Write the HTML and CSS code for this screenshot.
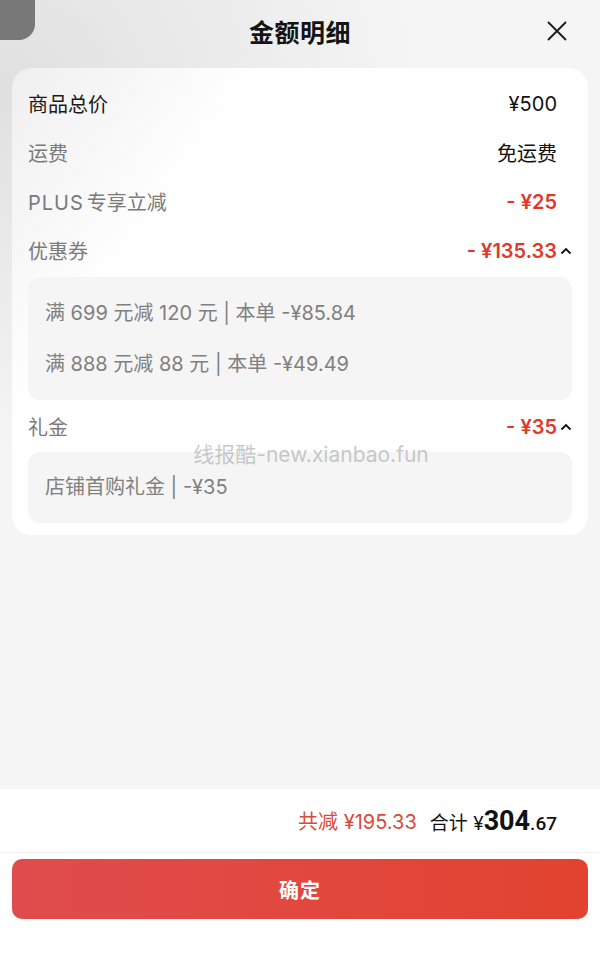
FILE: index.html
```html
<!DOCTYPE html>
<html lang="zh-CN">
<head>
    <meta charset="UTF-8">
    <meta name="viewport" content="width=device-width, initial-scale=1.0">
    <title>金额明细</title>
    <link rel="stylesheet" href="styles.css">
</head>
<body>

    <div class="sheet">
        <!-- page peeking from behind -->
        <div class="behind"></div>

        <div class="sheet-main">
            <div class="header">
                <span></span>
                <h2 class="title">金额明细</h2>
                <span class="close">
                    <svg width="20" height="20" viewBox="0 0 20 20">
                        <path d="M1 1 L19 19 M19 1 L1 19" stroke="#1a1a1a" stroke-width="1.8" fill="none"/>
                    </svg>
                </span>
            </div>

            <div class="card">
                <div class="row">
                    <span class="label dark">商品总价</span>
                    <span class="value">¥500</span>
                    <span class="caret-slot"></span>
                </div>
                <div class="row">
                    <span class="label">运费</span>
                    <span class="value">免运费</span>
                    <span class="caret-slot"></span>
                </div>
                <div class="row">
                    <span class="label"><span class="latin">PLUS</span>专享立减</span>
                    <span class="value red">- ¥25</span>
                    <span class="caret-slot"></span>
                </div>
                <div class="row">
                    <span class="label">优惠券</span>
                    <span class="value red">- ¥135.33</span>
                    <span class="caret-slot">
                        <svg width="12" height="8" viewBox="0 0 12 8"><path d="M1.5 6.5 L6 2 L10.5 6.5" stroke="#111" stroke-width="1.8" fill="none"/></svg>
                    </span>
                </div>
                <div class="sub-box">
                    <p>满 699 元减 120 元 | 本单 -¥85.84</p>
                    <p>满 888 元减 88 元 | 本单 -¥49.49</p>
                </div>
                <div class="row">
                    <span class="label">礼金</span>
                    <span class="value red">- ¥35</span>
                    <span class="caret-slot">
                        <svg width="12" height="8" viewBox="0 0 12 8"><path d="M1.5 6.5 L6 2 L10.5 6.5" stroke="#111" stroke-width="1.8" fill="none"/></svg>
                    </span>
                </div>
                <div class="sub-box single">
                    <p>店铺首购礼金 | -¥35</p>
                </div>

                <div class="watermark">线报酷-new.xianbao.fun</div>
            </div>
        </div>

        <div class="footer">
            <div class="summary">
                <span class="saved">共减 ¥195.33</span>
                <span class="total">合计 <span class="yen">¥</span><b>304</b><span class="cents">.67</span></span>
            </div>
            <button class="btn">确定</button>
        </div>
    </div>

</body>
</html>
```

FILE: styles.css
```css
/* General Styles */
body {
    margin: 0;
    padding: 0;
    font-family: Inter, "Noto Sans CJK SC", sans-serif;
    background-color: #f5f5f5;
    color: #1a1a1a;
}

.sheet {
    position: relative;
    height: 100vh;
    display: flex;
    flex-direction: column;
    background-color: #f5f5f5;
    background-image: radial-gradient(ellipse 420px 360px at 0 90px, #e0e0e0 0%, rgba(245, 245, 245, 0) 100%);
    overflow: hidden;
}

.behind {
    position: absolute;
    top: -20px;
    left: -20px;
    width: 55px;
    height: 60px;
    background-color: #787878;
    border-radius: 0 0 16px 0;
}

.sheet-main {
    flex: 1;
}

/* Header */
.header {
    height: 62px;
    display: grid;
    grid-template-columns: 1fr auto 1fr;
    align-items: center;
}

.title {
    margin: 0;
    font-family: "Noto Sans CJK SC", sans-serif;
    font-size: 25px;
    font-weight: 600;
    letter-spacing: 0.5px;
    color: #141414;
}

.close {
    justify-self: end;
    margin-right: 33px;
    display: flex;
}

/* Card */
.card {
    position: relative;
    margin: 6px 12px 0;
    padding: 11px 16px 12px;
    background: linear-gradient(125deg, #efefef 0%, #ffffff 28%);
    border-radius: 20px;
}

.row {
    height: 49px;
    display: flex;
    align-items: center;
    font-size: 20px;
}

.label {
    flex: 1;
    color: #7a7a7a;
}

.label.dark {
    color: #1a1a1a;
}

.latin {
    letter-spacing: 1px;
    margin-right: 3px;
}

.value {
    color: #111;
}

.value.red {
    color: #e0392b;
    font-weight: 600;
}

.caret-slot {
    width: 15px;
    display: flex;
    justify-content: flex-end;
    align-items: center;
}

.sub-box {
    margin: 2px 0;
    padding: 11px 17px 10px;
    background-color: #f5f5f5;
    border-radius: 12px;
}

.sub-box.single {
    margin: 1px 0 0;
    padding: 10px 17px;
}

.sub-box p {
    margin: 0;
    line-height: 51px;
    font-size: 20px;
    color: #808080;
}

.watermark {
    position: absolute;
    left: 0;
    right: 0;
    top: 370px;
    text-align: center;
    padding-left: 22px;
    font-size: 21px;
    color: rgba(190, 190, 190, 0.85);
    pointer-events: none;
}

/* Footer */
.footer {
    height: 182px;
    background-color: #fff;
}

.summary {
    height: 63px;
    display: flex;
    justify-content: flex-end;
    align-items: center;
    gap: 13px;
    padding-right: 43px;
    border-bottom: 1px solid #f2f2f2;
}

.saved {
    font-size: 20px;
    color: #d84b3b;
}

.total {
    font-size: 19px;
    color: #111;
}

.total b {
    font-family: "Roboto", "Noto Sans", sans-serif;
    font-size: 27px;
    font-weight: 700;
}

.total .cents {
    font-family: "Roboto", "Noto Sans", sans-serif;
    font-size: 19px;
    font-weight: 500;
}

.btn {
    display: block;
    width: 576px;
    height: 60px;
    margin: 6px 12px 0;
    border: none;
    border-radius: 10px;
    background: linear-gradient(90deg, #e04c4e 0%, #e2432f 100%);
    color: #fff;
    font-family: "Noto Sans CJK SC", sans-serif;
    font-size: 20px;
    font-weight: 600;
    letter-spacing: 1px;
    cursor: pointer;
}
```
